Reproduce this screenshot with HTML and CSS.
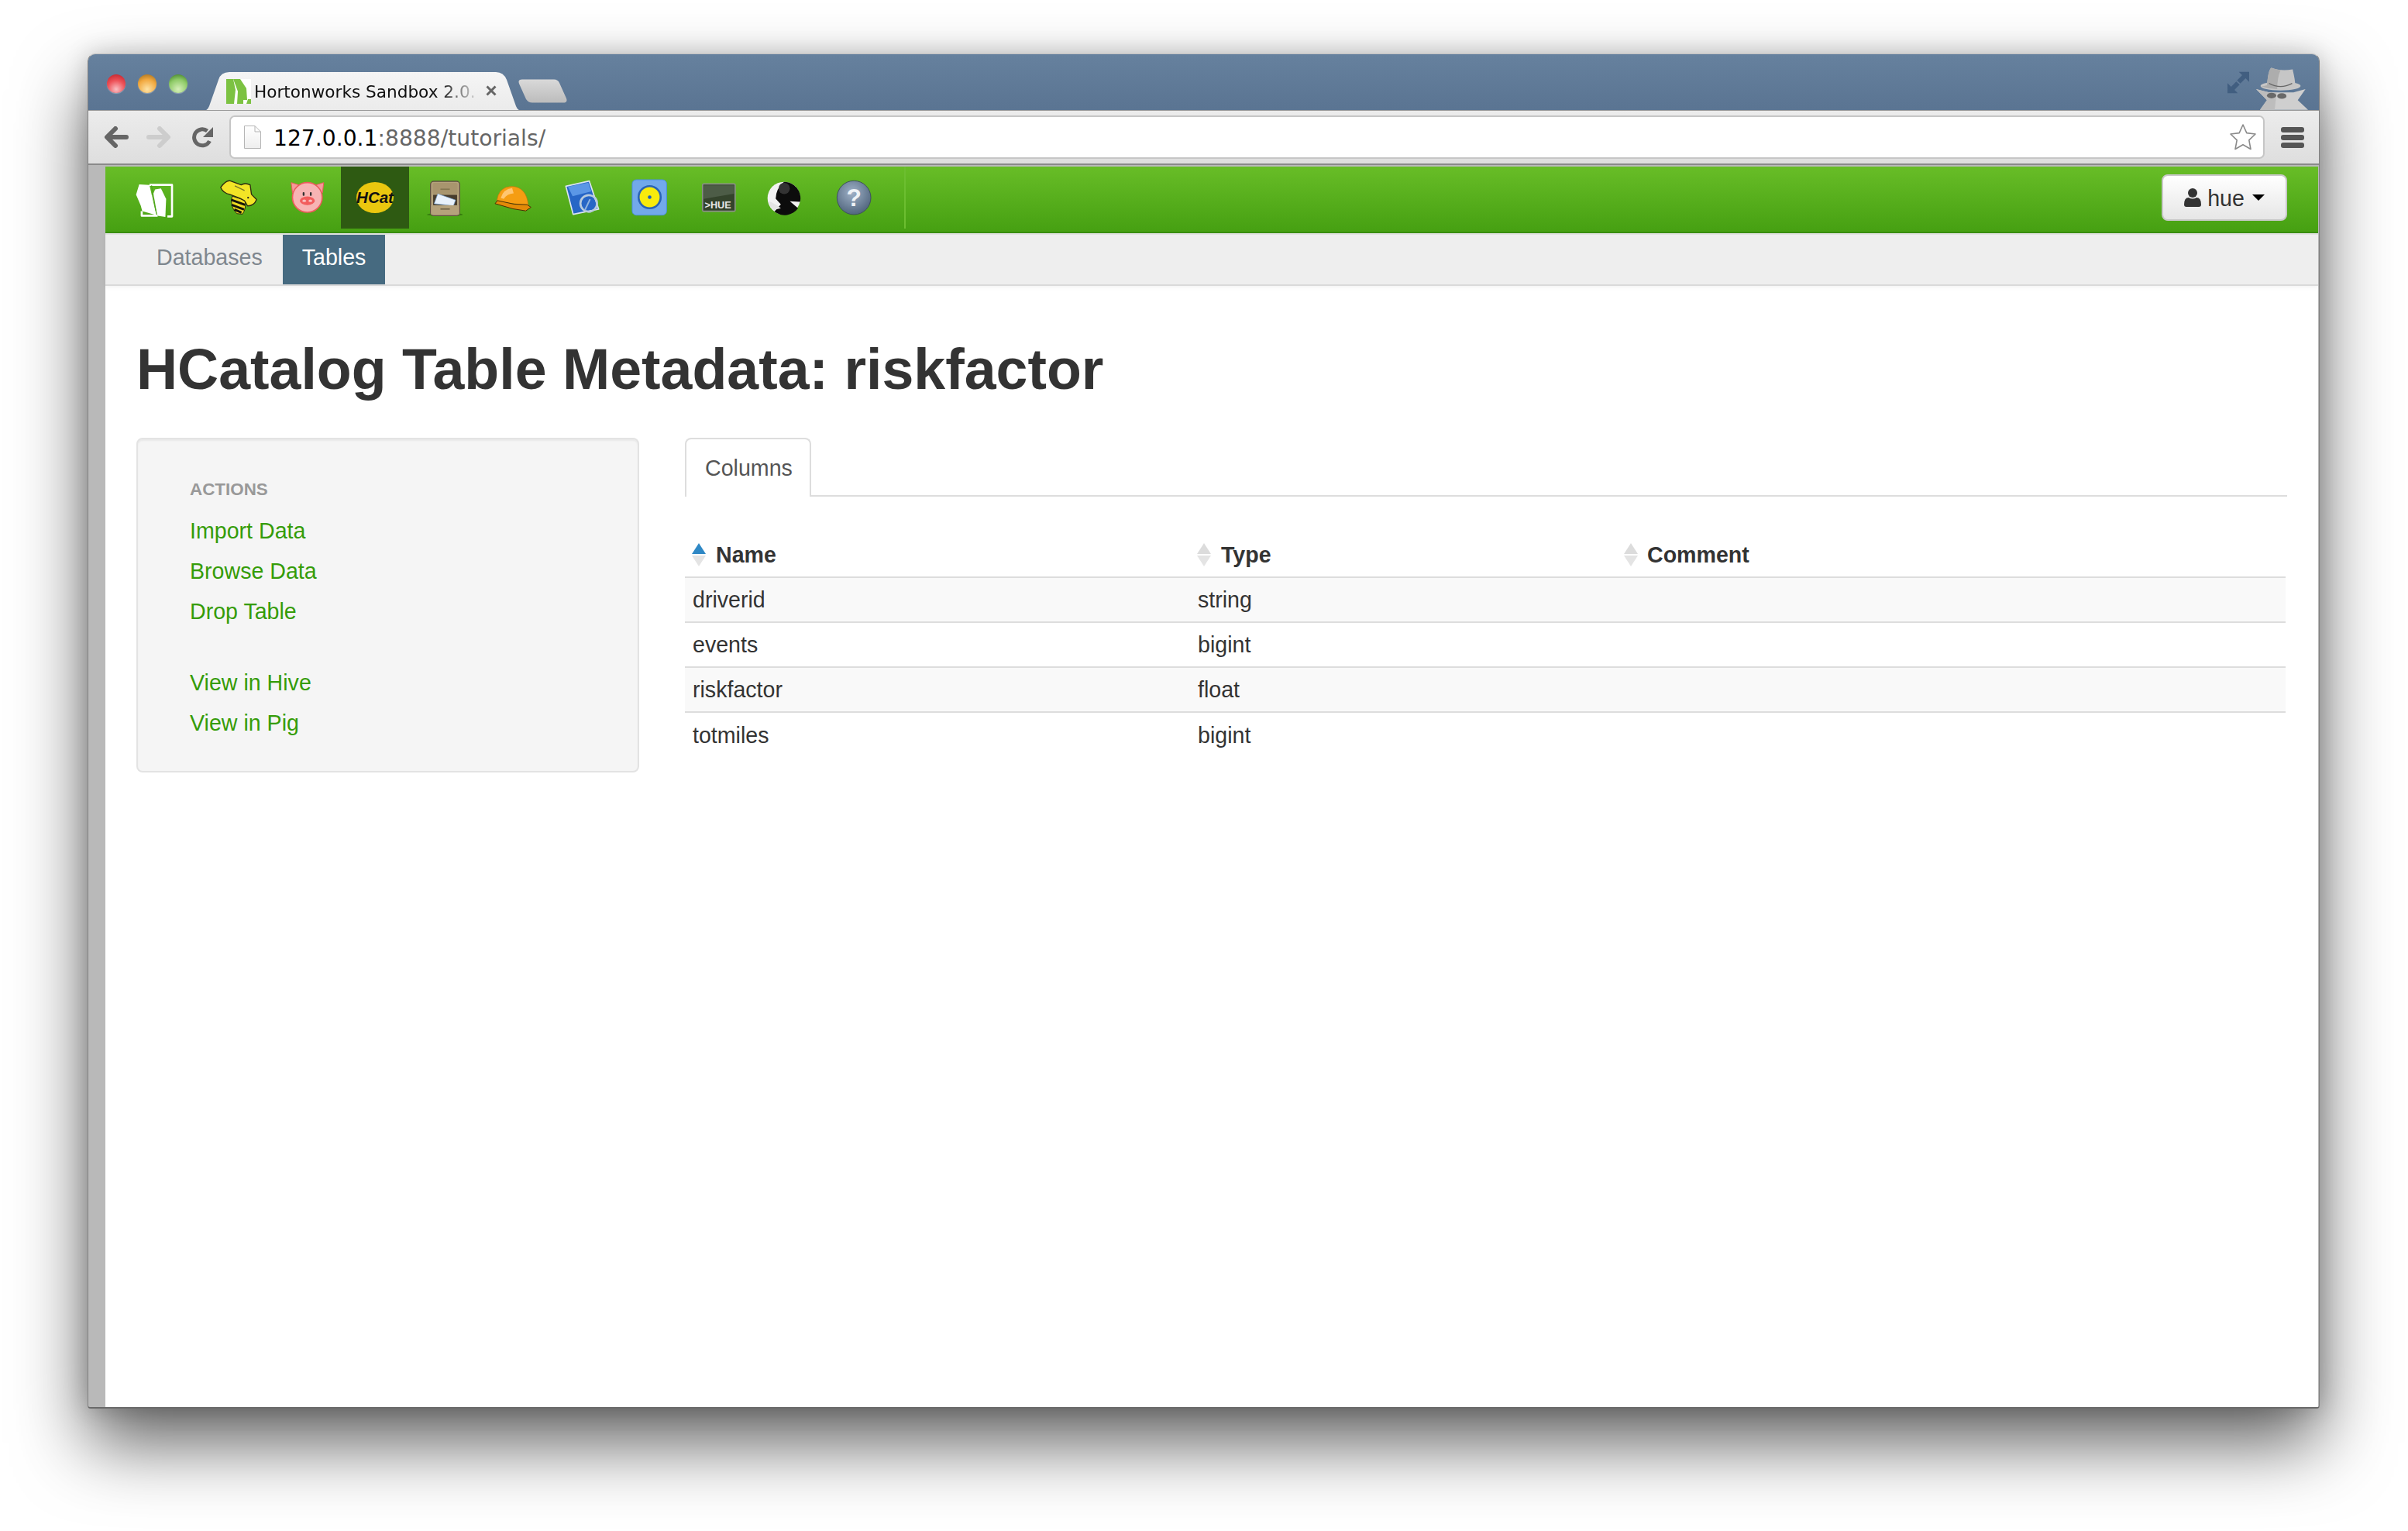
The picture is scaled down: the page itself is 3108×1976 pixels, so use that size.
FILE: index.html
```html
<!DOCTYPE html>
<html lang="en">
<head>
<meta charset="utf-8">
<title>Hortonworks Sandbox 2.0</title>
<link rel="stylesheet" href="styles.css">
</head>
<body>
<div class="window">
  <header class="titlebar">
    <div class="lights"><span class="light red"></span><span class="light amber"></span><span class="light green"></span></div>
    <div class="tab">
      <svg class="tab-shape" viewBox="0 0 412 50" preserveAspectRatio="none">
        <defs><linearGradient id="tabg" x1="0" y1="0" x2="0" y2="1"><stop offset="0" stop-color="#f5f5f5"/><stop offset="1" stop-color="#ebebeb"/></linearGradient></defs>
        <path d="M0 50 Q6 50 8 44 L20 10 Q23 0 34 0 H378 Q388 0 392 10 L404 44 Q406 50 412 50Z" fill="url(#tabg)"/>
      </svg>
      <svg class="favicon" viewBox="0 0 32 32">
        <rect width="32" height="32" fill="#fff"/>
        <path d="M0 0H9L12 14 10 32H0Z" fill="#7cc242"/>
        <path d="M9 0H18L26 12 27 27 22 27 22 32H14L15 16Z" fill="#7cc242"/>
        <path d="M28 26H32V32H26Z" fill="#7cc242"/>
      </svg>
      <span class="tab-title">Hortonworks Sandbox 2.0.</span>
      <svg class="tab-close" viewBox="0 0 14 14"><path d="M1.5 1.5 12.5 12.5M12.5 1.5 1.5 12.5" stroke="#666" stroke-width="3"/></svg>
    </div>
    <svg class="newtab" viewBox="0 0 63 31">
      <defs><linearGradient id="ntg" x1="0" y1="0" x2="0" y2="1"><stop offset="0" stop-color="#d9d9d9"/><stop offset="1" stop-color="#bcbcbc"/></linearGradient></defs>
      <path d="M5 0.5H46Q51 0.5 53 5L62 25Q64 30.5 58 30.5H18Q13 30.5 10 26L1 6Q-1 .5 5 .5Z" fill="url(#ntg)"/>
    </svg>
    <svg class="expand" viewBox="525 90 90 90">
      <path d="M612 95H572L585 108 565 128 578 140 598 120 612 134Z" fill="#415e80"/>
      <path d="M528 178H568L555 165 575 145 562 133 542 153 528 139Z" fill="#415e80"/>
    </svg>
    <svg class="incognito" viewBox="640 75 205 171">
      <path d="M640 165 690 178H785L832 165 802 208 842 246H655L682 208Z" fill="#cfcfcf"/>
      <path d="M640 165 690 178H720L712 246H655L682 208Z" fill="#bdbdbd"/>
      <ellipse cx="735" cy="153" rx="78" ry="17" fill="#c6c6c6"/>
      <path d="M682 150Q688 84 700 82 735 96 782 88 792 130 792 150Z" fill="#c6c6c6"/>
      <path d="M682 150Q688 84 700 82 722 90 735 91 722 120 722 165 690 165 660 155Z" fill="#adadad"/>
      <path d="M690 143Q735 167 780 143" fill="none" stroke="#666" stroke-width="4"/>
      <ellipse cx="700" cy="190" rx="18" ry="11" fill="#696969"/>
      <ellipse cx="740" cy="192" rx="18" ry="11" fill="#696969"/>
    </svg>
  </header>

  <div class="toolbar">
    <svg class="nav-back" viewBox="0 0 32 28"><path d="M29 14H6M15 3 4 14 15 25" fill="none" stroke="#666" stroke-width="6" stroke-linecap="round" stroke-linejoin="round"/></svg>
    <svg class="nav-forward" viewBox="0 0 32 28"><path d="M3 14H26M17 3 28 14 17 25" fill="none" stroke="#cdcdcd" stroke-width="6" stroke-linecap="round" stroke-linejoin="round"/></svg>
    <svg class="nav-reload" viewBox="0 0 28 28"><path d="M22.5 19A10.5 10.5 0 1 1 19.5 6" fill="none" stroke="#666" stroke-width="5"/><path d="M27 1V14H14Z" fill="#666"/></svg>
    <div class="omnibox">
      <svg class="doc" viewBox="0 0 22 30">
        <defs><linearGradient id="docg" x1="0" y1="0" x2="0" y2="1"><stop offset="0" stop-color="#fff"/><stop offset="1" stop-color="#eee"/></linearGradient></defs>
        <path d="M.5.5H14L21.500 8V29.500H.5Z" fill="url(#docg)" stroke="#b5b5b5"/><path d="M14 .5V8H21.500" fill="none" stroke="#b5b5b5"/>
      </svg>
      <span class="url"><span class="url-host">127.0.0.1</span>:8888/tutorials/</span>
      <svg class="star" viewBox="0 0 36 36"><path d="M18 2 22.800 12.600 34 14 25.800 21.900 28 33.500 18 27.800 8 33.500 10.200 21.900 2 14 13.200 12.600Z" fill="#fff" stroke="#8a8a8a" stroke-width="1.600" stroke-linejoin="round"/></svg>
    </div>
    <div class="menu-btn"><span></span><span></span><span></span></div>
  </div>

  <div class="viewport">
    <main class="page">
      <nav class="topnav">
        <a class="brand">
          <svg class="ic-logo" viewBox="40 60 160 140">
            <path d="M48 108 60 68 100 70 127 188 72 172 66 150Z" fill="#fff"/>
            <path d="M112 112 122 88 145 84 165 125 162 195 132 190Z" fill="#fff"/>
            <path d="M100 70H188V193H170M132 190H70V172" fill="none" stroke="#fff" stroke-width="8" stroke-linejoin="round"/>
            <path d="M108 72 125 170" stroke="#4ea51a" stroke-width="4"/>
          </svg>
        </a>
        <div class="apps">
          <a class="app">
            <svg class="ic-bee" viewBox="370 45 150 145">
              <path d="M420 112 470 128Q476 160 460 182L438 180Q408 150 420 112Z" fill="#eddc22" stroke="#2c2c10" stroke-width="3"/>
              <path d="M416 126 470 146M418 146 466 164M428 164 456 176" stroke="#15150a" stroke-width="9"/>
              <path d="M375 78Q395 50 412 52L455 68Q470 58 490 68L495 105 515 125Q505 150 480 150L468 130 450 120 410 105Q385 100 375 78Z" fill="#f3e526" stroke="#2c2c10" stroke-width="4" stroke-linejoin="round"/>
              <path d="M430 72 468 90" stroke="#77772a" stroke-width="4"/>
              <circle cx="482" cy="118" r="3.500" fill="#222"/>
            </svg>
          </a>
          <a class="app">
            <svg class="ic-pig" viewBox="640 55 135 130">
              <path d="M645 60 685 72 650 100ZM772 60 732 72 767 100Z" fill="#f59a9a" stroke="#ea5a5a" stroke-width="3"/>
              <circle cx="708" cy="118" r="58" fill="#f7b4b4" stroke="#ec5c5c" stroke-width="5"/>
              <ellipse cx="708" cy="131" rx="29" ry="17" fill="#f25d5d"/>
              <ellipse cx="696" cy="131" rx="7" ry="5" fill="#f8c0c0"/><ellipse cx="720" cy="131" rx="7" ry="5" fill="#f8c0c0"/>
              <rect x="690" y="97" width="7" height="15" rx="3" fill="#333"/><rect x="718" y="97" width="7" height="15" rx="3" fill="#333"/>
            </svg>
          </a>
          <a class="app app-active">
            <svg class="ic-hcat" viewBox="0 0 50 42">
              <ellipse cx="25" cy="21" rx="24" ry="20" fill="#eac70f"/>
              <text class="hcat-label" x="25" y="28" text-anchor="middle">HCat</text>
            </svg>
          </a>
          <a class="app">
            <svg class="ic-cab" viewBox="385 50 140 140">
              <ellipse cx="458" cy="184" rx="70" ry="6" fill="#2c6a0c" opacity=".7"/>
              <rect x="402" y="56" width="112" height="132" rx="12" fill="#b5a27c" stroke="#5e5240" stroke-width="4"/>
              <rect x="410" y="62" width="96" height="44" rx="6" fill="#a8956e"/>
              <rect x="412" y="108" width="92" height="46" fill="#473c2c"/>
              <path d="M416 142 430 104 498 128 490 150Z" fill="#e8f1fb" stroke="#7aa8d8" stroke-width="2"/>
              <rect x="404" y="148" width="108" height="36" fill="#b5a27c"/>
              <rect x="440" y="160" width="36" height="5" fill="#6f6349"/>
              <rect x="440" y="84" width="36" height="5" fill="#847650"/>
            </svg>
          </a>
          <a class="app">
            <svg class="ic-helmet" viewBox="650 65 150 110">
              <path d="M662 136Q668 75 722 75 778 78 785 150L730 142Z" fill="#f59d12" stroke="#b9770e" stroke-width="2"/>
              <path d="M678 120Q688 86 722 82L728 102Q700 104 690 124Z" fill="#ffc670"/>
              <path d="M656 142 665 130 730 144 780 146 795 156 775 170 725 162Z" fill="#e28a08" stroke="#4a3205" stroke-width="3" stroke-linejoin="round"/>
            </svg>
          </a>
          <a class="app">
            <svg class="ic-doc" viewBox="85 95 140 140">
              <path d="M92 120 182 100 218 208 120 228Z" fill="#2766c6" stroke="#dbe4ef" stroke-width="5" stroke-linejoin="round"/>
              <path d="M100 122 178 106 190 140 118 158Z" fill="#5b97e6"/>
              <circle cx="180" cy="186" r="32" fill="none" stroke="#b8cbde" stroke-width="8"/>
              <path d="M165 212 185 170" stroke="#90b4e0" stroke-width="6"/>
            </svg>
          </a>
          <a class="app">
            <svg class="ic-sandbox" viewBox="340 95 145 145">
              <rect x="346" y="98" width="134" height="138" rx="16" fill="#72a9ea" stroke="#4b8fdc" stroke-width="3"/>
              <circle cx="414" cy="166" r="43" fill="#f8eb0c" stroke="#2a64b4" stroke-width="8"/>
              <circle cx="414" cy="166" r="7" fill="#1e5fb6"/>
            </svg>
          </a>
          <a class="app">
            <svg class="ic-term" viewBox="610 105 140 120">
              <rect x="618" y="112" width="126" height="106" rx="4" fill="#34432c" stroke="#8b8f88" stroke-width="5"/>
              <path d="M622 118H740V150L622 170Z" fill="#4d5c47"/>
              <text class="term-label" x="626" y="208">&gt;HUE</text>
            </svg>
          </a>
          <a class="app">
            <svg class="ic-head" viewBox="865 95 145 140">
              <circle cx="937" cy="166" r="64" fill="#f2f2f2"/>
              <path d="M937 102A64 64 0 0 1 1000 180L960 178 992 205A64 64 0 0 1 900 218L925 190 905 168Q905 130 937 102Z" fill="#0c0c0c"/>
              <circle cx="938" cy="128" r="22" fill="#333"/>
              <path d="M878 178Q900 185 925 205L898 212Q878 200 878 178Z" fill="#e4e4e4"/>
            </svg>
          </a>
          <a class="app">
            <svg class="ic-help" viewBox="1132 92 145 145">
              <defs><radialGradient id="helpg" cx=".45" cy=".35" r=".7"><stop offset="0" stop-color="#9fb1c7"/><stop offset="1" stop-color="#4b6078"/></radialGradient></defs>
              <circle cx="1205" cy="165" r="66" fill="url(#helpg)" stroke="#3d4f5e" stroke-width="3"/>
              <text class="help-label" x="1205" y="198" text-anchor="middle">?</text>
            </svg>
          </a>
        </div>
        <a class="user-btn">
          <svg class="user-ic" viewBox="0 0 22 24"><circle cx="11" cy="6" r="6" fill="#333"/><path d="M0 21Q0 12 6 12 11 15 16 12 22 12 22 21 22 24 19 24H3Q0 24 0 21Z" fill="#333"/></svg>
          <span class="user-name">hue</span>
          <span class="caret"></span>
        </a>
      </nav>

      <nav class="subnav">
        <a class="subnav-item">Databases</a>
        <a class="subnav-item is-current">Tables</a>
      </nav>

      <section class="content">
        <h1 class="heading">HCatalog Table Metadata: riskfactor</h1>
        <div class="columns">
          <aside class="sidebar">
            <h2 class="side-title">ACTIONS</h2>
            <ul class="side-list">
              <li><a>Import Data</a></li>
              <li><a>Browse Data</a></li>
              <li class="group-end"><a>Drop Table</a></li>
              <li><a>View in Hive</a></li>
              <li><a>View in Pig</a></li>
            </ul>
          </aside>
          <div class="main">
            <div class="tabs"><a class="tabs-item">Columns</a></div>
            <table class="grid">
              <colgroup><col class="col-name"><col class="col-type"><col class="col-comment"></colgroup>
              <thead>
                <tr>
                  <th class="sort asc">Name</th>
                  <th class="sort">Type</th>
                  <th class="sort">Comment</th>
                </tr>
              </thead>
              <tbody>
                <tr><td>driverid</td><td>string</td><td></td></tr>
                <tr><td>events</td><td>bigint</td><td></td></tr>
                <tr><td>riskfactor</td><td>float</td><td></td></tr>
                <tr><td>totmiles</td><td>bigint</td><td></td></tr>
              </tbody>
            </table>
          </div>
        </div>
      </section>
    </main>
  </div>
</div>
</body>
</html>
```

FILE: styles.css
```css
* { box-sizing: border-box; }
html, body { margin: 0; height: 100%; background: #fff; overflow: hidden; }
body { padding: 69px 0 0 113px; font-family: "Liberation Sans", Arial, sans-serif; color: #333; }
a { color: inherit; text-decoration: none; }
svg { display: block; flex: none; }

/* Browser window */
.window {
  width: 2881px; height: 1749px;
  display: flex; flex-direction: column;
  border: 1px solid #808080; border-top-color: #c2c2c2; border-bottom: 2px solid #6a6a6a;
  border-radius: 10px 10px 4px 4px;
  background: #b9b9b9;
  box-shadow: 0 45px 92px rgba(0,0,0,.62), 0 0 30px rgba(0,0,0,.18);
}

.titlebar {
  height: 73px; flex: none;
  display: flex; align-items: flex-start;
  padding-left: 24px;
  background: linear-gradient(#66819e, #5a7492);
  border-radius: 9px 9px 0 0;
  overflow: hidden;
  border-bottom: 1px solid #9a9a9a;
}
.lights { display: flex; gap: 16px; margin-top: 26px; }
.light { width: 24px; height: 24px; border-radius: 50%; box-shadow: 0 1px 1px rgba(255,255,255,.35); }
.red { background: radial-gradient(circle at 50% 80%, #f9c0c4 0, #ee5259 50%, #b81c25 100%); }
.amber { background: radial-gradient(circle at 50% 80%, #fde3a6 0, #f2a93f 55%, #97661a 100%); }
.green { background: radial-gradient(circle at 50% 80%, #d6efba 0, #8fcb68 55%, #35751f 100%); }

.tab {
  position: relative;
  width: 412px; height: 50px;
  margin: 23px 0 0 20px;
  display: flex; align-items: center;
  padding: 0 0 0 30px;
}
.tab-shape { position: absolute; inset: 0; width: 100%; height: 100%; }
.favicon { position: relative; width: 32px; height: 32px; margin-top: -1px; }
.tab-title {
  position: relative;
  width: 285px; margin-left: 4px;
  font: 21.600px "DejaVu Sans", sans-serif;
  color: #111; white-space: nowrap;
  -webkit-mask-image: linear-gradient(90deg, #000 84%, rgba(0,0,0,.15) 100%);
  mask-image: linear-gradient(90deg, #000 84%, rgba(0,0,0,.15) 100%);
}
.tab-close { position: relative; width: 14px; height: 14px; margin-left: 14px; margin-top: -2px; }
.newtab { width: 63px; height: 31px; margin: 32px 0 0 -5px; }
.expand { width: 30px; height: 30px; margin: 21px 8px 0 auto; }
.incognito { width: 68px; height: 57px; margin: 15px 13px 0 0; }

.toolbar {
  height: 70px; flex: none;
  display: flex; align-items: center;
  background: linear-gradient(#ececec, #dedede);
  border-bottom: 2px solid #8a8a8a;
}
.nav-back { width: 32px; height: 28px; margin-left: 20px; }
.nav-forward { width: 32px; height: 28px; margin-left: 23px; }
.nav-reload { width: 28px; height: 28px; margin-left: 27px; }
.omnibox {
  flex: 1; height: 56px;
  margin-left: 20px;
  display: flex; align-items: center;
  padding: 0 8px 0 17px;
  background: #fff;
  border: 2px solid #c6c6c6; border-radius: 7px;
}
.doc { width: 22px; height: 30px; }
.url { margin-left: 16px; padding-top: 2px; font: 28.200px "DejaVu Sans", sans-serif; color: #666; white-space: nowrap; }
.url-host { color: #000; }
.star { width: 36px; height: 36px; margin-left: auto; }
.menu-btn { width: 30px; margin: 0 19px 0 21px; display: flex; flex-direction: column; gap: 3px; }
.menu-btn span { height: 7px; border-radius: 3px; background: #555; }

.viewport { flex: 1; min-height: 0; display: flex; padding: 2px 1px 0 22px; }
.page { flex: 1; min-width: 0; background: #fff; display: flex; flex-direction: column; }

/* App bar */
.topnav {
  height: 86px; flex: none;
  display: flex; align-items: flex-start;
  padding-left: 24px;
  background: linear-gradient(#68bd27, #46a012);
  border-bottom: 2px solid #3a8f0e;
}
.brand { width: 104px; height: 80px; display: flex; align-items: center; padding-left: 13px; padding-top: 6px; }
.apps {
  display: grid; height: 80px;
  grid-template-columns: 88px 88px 88px 90px 88px 91px 82px 96px 74px 106px;
  padding-right: 12px;
  border-right: 2px solid #6cbe30;
}
.app { display: flex; align-items: center; justify-content: center; }
.app-active { background: #2e5a12; }
.ic-logo { width: 53px; height: 47px; }
.ic-bee { width: 50px; height: 48px; }
.ic-pig { width: 45px; height: 43px; }
.ic-hcat { width: 50px; height: 42px; }
.ic-cab { width: 47px; height: 47px; }
.ic-helmet { width: 50px; height: 37px; }
.ic-doc { width: 47px; height: 47px; }
.ic-sandbox { width: 48px; height: 48px; }
.ic-term { width: 47px; height: 40px; }
.ic-head { width: 48px; height: 47px; }
.ic-help { width: 48px; height: 48px; }
.hcat-label { font: italic bold 20.500px "Liberation Sans", sans-serif; fill: #111; }
.term-label { font: bold 38px "Liberation Sans", sans-serif; fill: #e8e8e8; }
.help-label { font: bold 96px "Liberation Sans", sans-serif; fill: #eef2f6; }

.user-btn {
  margin: 10px 40px 0 auto;
  width: 162px; height: 60px;
  display: flex; align-items: center; justify-content: center; gap: 8px;
  font-size: 28.600px; color: #333;
  background: linear-gradient(#fff, #e6e6e6);
  border: 2px solid #c8c8c8; border-radius: 8px;
}
.user-name { padding-top: 2px; }
.user-ic { width: 22px; height: 24px; }
.caret { width: 0; height: 0; margin-left: 2px; border: 8px solid transparent; border-top-color: #000; border-bottom: 0; }

/* Sub navigation */
.subnav {
  height: 68px; flex: none;
  display: flex; gap: 1px;
  padding-left: 41px;
  background: #eee;
  border-top: 2px solid #e2e2e2; border-bottom: 2px solid #d9d9d9;
  box-shadow: 0 2px 5px rgba(0,0,0,.05);
}
.subnav-item { padding: 0 25px; line-height: 59px; font-size: 28.600px; color: #7f878e; }
.is-current { background: #466a80; color: #fff; }

/* Content */
.content { padding: 68px 42px 0 40px; }
.heading { margin: 0 0 48px; font-size: 73.500px; line-height: 80px; font-weight: bold; color: #333; }
.columns { display: flex; gap: 59px; align-items: flex-start; }

.sidebar {
  width: 649px; height: 432px; flex: none;
  padding: 52px 67px 0;
  background: #f5f5f5;
  border: 2px solid #e3e3e3; border-radius: 8px;
  box-shadow: inset 0 2px 2px rgba(0,0,0,.05);
}
.side-title { margin: 0 0 14px; font-size: 22.400px; line-height: 26px; font-weight: bold; color: #999; }
.side-list { list-style: none; margin: 0; padding: 0; font-size: 28.600px; line-height: 52px; color: #359c08; }
.group-end { margin-bottom: 40px; }

.main { flex: 1; min-width: 0; }
.tabs { display: flex; height: 76px; border-bottom: 2px solid #ddd; margin-right: -2px; }
.tabs-item {
  width: 163px; height: 76px;
  padding-left: 24px; line-height: 74px;
  font-size: 28.600px; color: #555;
  background: #fff;
  border: 2px solid #ddd; border-bottom: 0; border-radius: 8px 8px 0 0;
}
.grid { width: 100%; table-layout: fixed; border-collapse: collapse; margin-top: 44px; font-size: 28.600px; }
.col-name { width: 652px; }
.col-type { width: 560px; }
.grid th { position: relative; height: 60px; padding: 3px 0 0 40px; text-align: left; font-weight: bold; color: #333; border-bottom: 2px solid #ddd; vertical-align: middle; }
.grid th:nth-child(3) { padding-left: 30px; }
.grid td { height: 58px; padding: 1px 10px 0; color: #333; border-top: 2px solid #ddd; }
.grid thead + tbody tr:first-child td { border-top: 0; }
.grid tbody tr:nth-child(odd) td { background: #f9f9f9; }
.sort::before, .sort::after { content: ""; position: absolute; left: 9px; width: 0; height: 0; border-left: 9px solid transparent; border-right: 9px solid transparent; }
.sort:nth-child(3)::before, .sort:nth-child(3)::after { left: 0; }
.sort::before { top: 16px; border-bottom: 14px solid #dcdcdc; }
.sort::after { top: 32px; border-top: 14px solid #e4e4e4; }
.asc::before { border-bottom-color: #2f88c5; }
```
